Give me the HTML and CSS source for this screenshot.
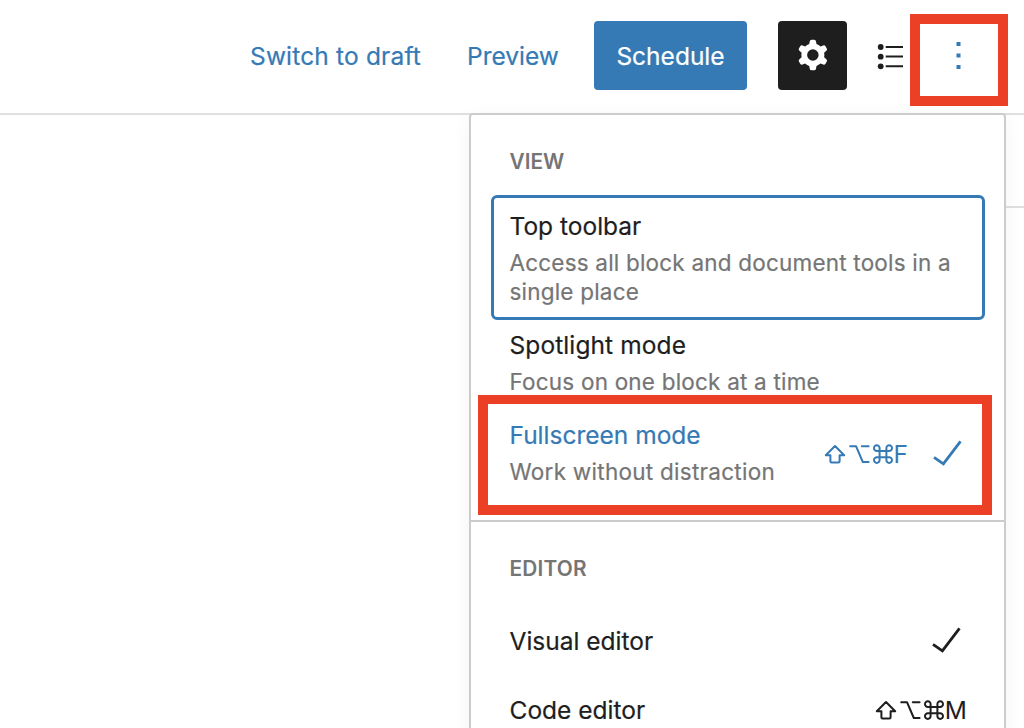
FILE: index.html
```
<!DOCTYPE html>
<html lang="en">
<head>
<meta charset="utf-8">
<title>Editor options</title>
<link rel="stylesheet" href="styles.css">
</head>
<body>
<svg class="defs" width="0" height="0">
  <symbol id="modifiers" viewBox="0 0 70 20">
    <g fill="none" stroke="currentColor" stroke-width="2" stroke-linejoin="round" stroke-linecap="round">
      <path d="M11 2L20.2 11.2H15.6V17.2Q15.6 18.4 14.4 18.4H7.6Q6.4 18.4 6.4 17.2V11.2H1.8Z"/>
      <path d="M26.2 2.2H32L38.8 18H44.6M37.8 2.2H44.6"/>
      <path d="M55.6 6.9H62.4V13.3H55.6ZM55.6 6.9H53A2.8 2.8 0 1 1 55.6 4.2ZM62.4 6.9V4.2A2.8 2.8 0 1 1 65 6.9ZM62.4 13.3H65A2.8 2.8 0 1 1 62.4 16ZM55.6 13.3V16A2.8 2.8 0 1 1 53 13.3Z"/>
    </g>
  </symbol>
</svg>
<div class="editor">
  <header class="header">
    <a class="link draft">Switch to draft</a>
    <a class="link preview">Preview</a>
    <button class="schedule"><span>Schedule</span></button>
    <button class="settings" aria-label="Settings">
      <svg width="46" height="46" viewBox="0 0 24 24"><path fill="#fff" fill-rule="evenodd" d="M10.289 4.836A1 1 0 0111.275 4h1.306a1 1 0 01.987.836l.244 1.466c.787.26 1.503.679 2.108 1.218l1.393-.522a1 1 0 011.216.437l.653 1.13a1 1 0 01-.23 1.273l-1.148.944a6.025 6.025 0 010 2.435l1.149.946a1 1 0 01.23 1.272l-.653 1.13a1 1 0 01-1.216.437l-1.394-.522c-.605.54-1.32.958-2.108 1.218l-.244 1.466a1 1 0 01-.987.836h-1.306a1 1 0 01-.986-.836l-.244-1.466a5.995 5.995 0 01-2.108-1.218l-1.394.522a1 1 0 01-1.217-.436l-.653-1.131a1 1 0 01.23-1.272l1.149-.946a6.026 6.026 0 010-2.435l-1.148-.944a1 1 0 01-.23-1.272l.653-1.131a1 1 0 011.217-.437l1.393.522a5.994 5.994 0 012.108-1.218l.244-1.466zM14.929 12a3 3 0 11-6 0 3 3 0 016 0z"/></svg>
    </button>
    <svg class="list" width="28" height="28" viewBox="0 0 28 28"><g fill="#1e1e1e"><circle cx="4.7" cy="5" r="2.9"/><circle cx="4.7" cy="14.7" r="2.9"/><circle cx="4.7" cy="24.3" r="2.9"/><path d="M9.7 4h17.3v2H9.7zM9.7 13.6h17.3v2H9.7zM9.7 23.2h17.3v2H9.7z"/></g></svg>
    <svg class="more" width="8" height="30" viewBox="0 0 8 30"><path fill="#357ab5" d="M2.5 2h4v4h-4zM2.5 13.6h4v4h-4zM2.5 25h4v4h-4z"/></svg>
  </header>
  <div class="sidebar-head"></div>
  <div class="mark mark-more"></div>

  <div class="menu">
    <section class="group">
      <h2 class="heading view">VIEW</h2>
      <div class="item focused">
        <div class="title">Top toolbar</div>
        <div class="desc">Access all block and document tools in a<br>single place</div>
      </div>
      <div class="item spotlight">
        <div class="title roomy">Spotlight mode</div>
        <div class="desc">Focus on one block at a time</div>
      </div>
      <div class="item fullscreen">
        <div class="copy">
          <div class="title">Fullscreen mode</div>
          <div class="desc">Work without distraction</div>
        </div>
        <div class="keys"><svg width="70" height="20" role="img" aria-label="Shift Option Command"><use href="#modifiers"/></svg><span>F</span></div>
        <svg class="check" width="32" height="30" viewBox="0 0 32 30"><path d="M3 18.3L12.4 24.8 29.5 2.3"/></svg>
      </div>
    </section>
    <section class="group">
      <h2 class="heading edit">EDITOR</h2>
      <div class="row">
        <div class="title">Visual editor</div>
        <svg class="check" width="32" height="30" viewBox="0 0 32 30"><path d="M3 18.3L12.4 24.8 29.5 2.3"/></svg>
      </div>
      <div class="row">
        <div class="title">Code editor</div>
        <div class="keys last"><svg width="70" height="20" role="img" aria-label="Shift Option Command"><use href="#modifiers"/></svg><span>M</span></div>
      </div>
    </section>
  </div>
  <div class="mark mark-full"></div>
</div>
</body>
</html>
```
FILE: styles.css
```
* { box-sizing: border-box; }
body { margin: 0; background: #fff; font-family: Inter, "Liberation Sans", sans-serif; color: #1e1e1e; }
.defs { display: block; }
.editor { position: relative; width: 1024px; height: 728px; overflow: hidden; }

.header { display: flex; align-items: center; height: 115px; padding: 0 0 3px 250px; border-bottom: 2px solid #e0e0e0; font-size: 24.5px; }
.link { padding-top: 2px; color: #357ab5; white-space: nowrap; -webkit-text-stroke: .2px; }
.draft { width: 217px; letter-spacing: .17px; }
.preview { width: 127px; }
button { border: 0; padding: 0; font: inherit; display: flex; align-items: center; justify-content: center; flex: none; }
.schedule { width: 153px; height: 69px; padding-top: 2px; border-radius: 4px; background: #357ab5; color: #fff; -webkit-text-stroke: .2px; }
.settings { width: 69px; height: 69px; margin-left: 31px; border-radius: 4px; background: #1e1e1e; }
.list { flex: none; margin: 2px 0 0 29px; }
.more { flex: none; margin-left: 50px; }

.sidebar-head { height: 93px; margin-left: 1006px; border-bottom: 2px solid #e0e0e0; }

.menu { position: absolute; left: 469px; top: 113px; width: 537px; height: 640px; border: 2px solid #ccc; border-radius: 4px; background: #fff; box-shadow: 0 4px 20px rgba(0,0,0,.05); }
.group + .group { border-top: 2px solid #ccc; }
.heading { margin: 0; padding: 32px 0 0 38.5px; height: 80px; line-height: 30px; font-size: 20.8px; font-weight: 600; color: #757575; }
.edit { height: 84px; padding-top: 32px; letter-spacing: .2px; }
.item { margin: 0 19px 0 20px; padding-left: 18.5px; }
.title { font-size: 24.5px; line-height: 38px; white-space: nowrap; -webkit-text-stroke: .2px; }
.roomy { letter-spacing: .1px; }
.desc { margin-top: 3px; font-size: 22.5px; line-height: 29px; letter-spacing: .2px; color: #757575; white-space: nowrap; -webkit-text-stroke: .2px; }
.focused { height: 125px; padding: 9px 0 0 15.5px; border: 3px solid #357ab5; border-radius: 6px; }
.spotlight { padding-top: 6px; }
.fullscreen { display: flex; padding-top: 20px; height: 124px; }
.fullscreen .desc { letter-spacing: .27px; }
.fullscreen .copy { width: 314px; }
.fullscreen .title, .fullscreen .keys { color: #357ab5; }
.keys { display: flex; align-items: center; height: 38px; font-size: 24.5px; }
.keys svg { flex: none; }
.keys span { line-height: 38px; }
.fullscreen .keys { margin-top: 19px; width: 109px; }
.check { flex: none; fill: none; stroke: #1e1e1e; stroke-width: 2.8; }
.fullscreen .check { margin: 23px 0 0 -1.5px; stroke: #357ab5; }
.row { display: flex; align-items: center; justify-content: space-between; height: 69px; padding: 0 42px 0 38.5px; }
.last { margin-right: -5px; }

.mark { position: absolute; border: 10px solid #eb4026; }
.mark-more { left: 910px; top: 14px; width: 98px; height: 92px; }
.mark-full { left: 478px; top: 395px; width: 514px; height: 120px; border-top-width: 9px; }
```
